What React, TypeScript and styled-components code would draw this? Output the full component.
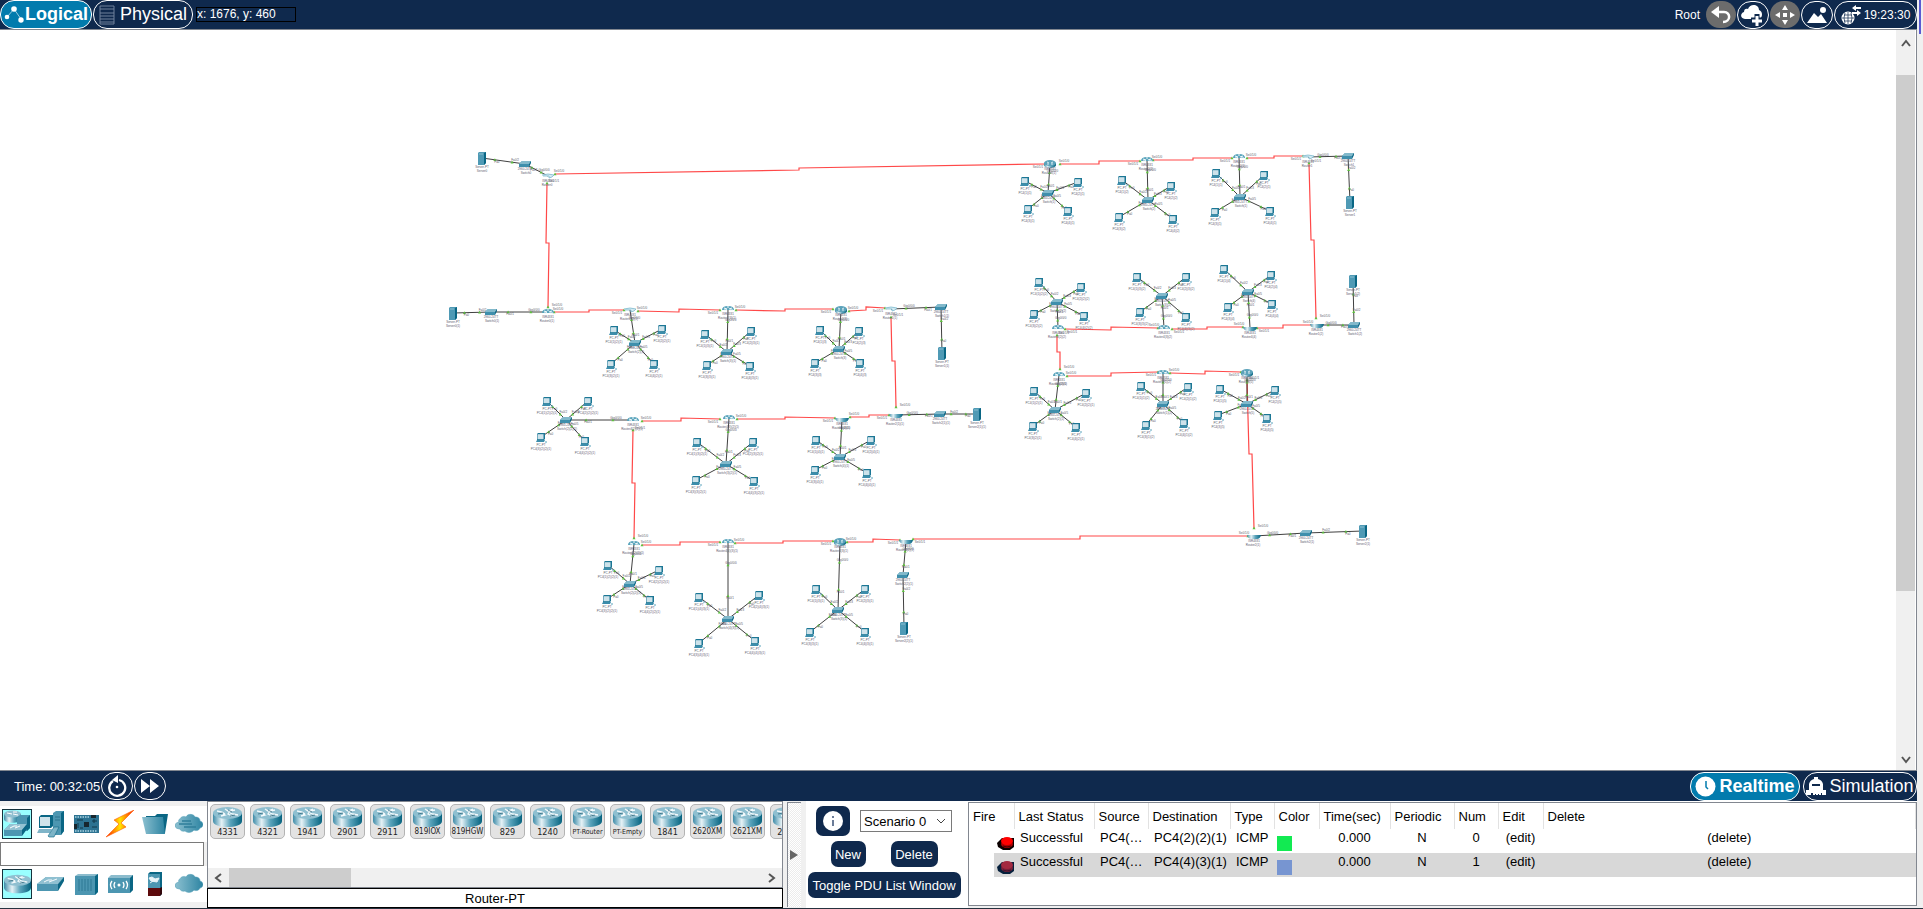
import React from 'react';
import styled, { createGlobalStyle, css } from 'styled-components';

const GlobalStyle = createGlobalStyle`
  * { box-sizing: border-box; }
  body { margin: 0; background: #f0f0f0; }
  body, button, input, select { font-family: "Liberation Sans", Arial, sans-serif; font-size: 13px; }
`;

const navy = '#0f294d';
const teal = '#027bad';
const edge = '#828790';

/* ---------- frame ---------- */

const Window = styled.div`
  position: relative;
  display: flex;
  flex-direction: column;
  min-height: 100vh;
  padding-right: 6px;
  border-bottom: 1px solid #26323f;
  color: #000;
`;

const ForeignEdge = styled.div`
  position: absolute;
  top: 0;
  right: 2px;
  width: 2px;
  height: 34px;
  background: #5a5ad2;
`;

const Bar = styled.header<{ $height: number }>`
  display: flex;
  align-items: center;
  justify-content: space-between;
  height: ${p => p.$height}px;
  background: ${navy};
  color: #fff;
`;

const BarGroup = styled.div<{ $gap?: number }>`
  display: flex;
  align-items: center;
  gap: ${p => p.$gap ?? 1}px;
`;

const Pill = styled.button<{ $active?: boolean; $width: number }>`
  display: flex;
  align-items: center;
  justify-content: center;
  gap: ${p => (p.$active ? 1 : 3)}px;
  width: ${p => p.$width}px;
  height: 29px;
  padding: 0;
  border: 1px solid #fff;
  border-radius: 14px;
  background: ${p => (p.$active ? teal : navy)};
  color: #fff;
  font-size: 18px;
  font-weight: ${p => (p.$active ? 700 : 400)};
  white-space: nowrap;
`;

const RoundButton = styled.button<{ $muted?: boolean; $wide?: boolean }>`
  display: flex;
  align-items: center;
  justify-content: center;
  gap: 2px;
  width: ${p => (p.$wide ? 83 : p.$muted ? 30 : 32)}px;
  height: ${p => (p.$muted ? 27 : 28)}px;
  padding: 0;
  border: ${p => (p.$muted ? 'none' : '1px solid #fff')};
  border-radius: 14px;
  background: ${p => (p.$muted ? '#6c6c6c' : navy)};
  color: #fff;
  font-size: 12px;
`;

const Coordinates = styled.output`
  width: 100px;
  height: 15px;
  margin-left: 2px;
  border: 1px solid #000;
  font-size: 12px;
  line-height: 13px;
`;

const RootLabel = styled.span`
  margin-right: 5px;
  font-size: 12px;
`;

const Clock = styled.span`
  padding-left: 14px;
`;

/* ---------- workspace ---------- */

const Workspace = styled.main`
  display: flex;
  flex: 1;
  min-height: 640px;
  border: solid ${edge};
  border-width: 1px 1px 1px 0;
  background: #fff;
`;

const Topology = styled.svg`
  flex: 1;
  min-width: 0;
  display: block;
  font-family: "Liberation Sans", Arial, sans-serif;
  font-size: 3px;
`;

const VScroll = styled.div`
  display: flex;
  flex-direction: column;
  width: 20px;
  border-right: 1px solid #fff;
  background: #f0f0f0;
`;

const VThumb = styled.div`
  flex: 516;
  background: #cdcdcd;
`;
const VRest = styled.div`
  flex: 150;
`;

const ScrollButton = styled.button<{ $size: number; $vertical?: boolean }>`
  display: flex;
  align-items: center;
  justify-content: center;
  flex: none;
  width: ${p => (p.$vertical ? 19 : p.$size)}px;
  height: ${p => (p.$vertical ? p.$size : 19)}px;
  padding: 0;
  border: 0;
  background: #f0f0f0;
`;

/* ---------- bottom panels ---------- */

const Dock = styled.footer`
  display: flex;
  height: 107px;
`;

const Picker = styled.section`
  display: flex;
  flex-direction: column;
  width: 207px;
  padding: 5px 0 6px;
`;

const IconRow = styled.div`
  display: flex;
  flex: 1;
  align-items: center;
  justify-content: space-between;
  padding: 0 3px 0 2px;
  background: #fff;
`;

const KindButton = styled.button<{ $selected?: boolean }>`
  display: flex;
  align-items: center;
  justify-content: center;
  width: 30px;
  height: 30px;
  padding: 0;
  border: ${p => (p.$selected ? '1px solid #15323c' : '0')};
  background: ${p => (p.$selected ? '#99ffff' : 'transparent')};
`;

const DeviceName = styled.input`
  width: 204px;
  height: 24px;
  border: 1px solid #7a7a7a;
  background: #fff;
`;

const Models = styled.section`
  display: flex;
  flex-direction: column;
  width: 576px;
`;

const ModelList = styled.div`
  display: flex;
  flex: 1;
  flex-direction: column;
  justify-content: space-between;
  border: 1px solid ${edge};
  background: #fff;
`;

const ModelStrip = styled.div`
  display: flex;
  gap: 5px;
  padding: 2px 0 0 2px;
  overflow: hidden;
`;

const ModelButton = styled.button<{ $font: number }>`
  display: flex;
  flex: none;
  flex-direction: column;
  align-items: center;
  width: 35px;
  height: 35px;
  padding: 2px 0 0;
  border: 1px solid #b4b4b4;
  border-radius: 5px;
  background: #e3e3e3;
  color: #222;
  font-family: "DejaVu Sans Condensed", "DejaVu Sans", sans-serif;
  font-size: ${p => p.$font}px;
  line-height: 10px;
  white-space: nowrap;
`;

const HScroll = styled.div`
  display: flex;
  height: 19px;
  background: #f0f0f0;
`;

const HThumb = styled.div`
  width: 122px;
  background: #cdcdcd;
`;

const HRest = styled.div`
  flex: 1;
`;

const ModelName = styled.div`
  height: 20px;
  border: 1px solid #000;
  background: #fff;
  line-height: 19px;
  text-align: center;
`;

const Splitter = styled.button`
  display: flex;
  align-items: center;
  width: 14px;
  margin: 1px 5px 1px 4px;
  padding: 0 0 0 1px;
  border: solid ${edge};
  border-width: 1px 0 0 1px;
  background: repeating-conic-gradient(#fff 0 25%, #ececec 0 50%) 0 0 / 2px 2px;
`;

const Scenario = styled.section`
  display: flex;
  flex-direction: column;
  align-items: center;
  gap: 5px;
  width: 162px;
  padding: 5px 6px 0 0;
  background: #fff;
`;

const ScenarioRow = styled.div<{ $gap: number }>`
  display: flex;
  align-items: center;
  gap: ${p => p.$gap}px;
`;

const DarkButton = styled.button<{ $width: number; $height?: number }>`
  display: flex;
  align-items: center;
  justify-content: center;
  width: ${p => p.$width}px;
  height: ${p => p.$height ?? 26}px;
  padding: 0;
  border: 0;
  border-radius: 7px;
  background: ${navy};
  color: #fff;
  white-space: nowrap;
`;

const SelectBox = styled.div`
  position: relative;
  svg { position: absolute; right: 6px; top: 8px; pointer-events: none; }
`;

const ScenarioSelect = styled.select`
  appearance: none;
  width: 92px;
  height: 22px;
  padding: 0 0 0 3px;
  border: 1px solid #7a7a7a;
  border-radius: 0;
  background: #fff;
  color: #000;
`;

const PduPanel = styled.section`
  flex: 1;
  min-width: 0;
  margin-bottom: 2px;
  padding-top: 1px;
  background: #fff;
`;

const PduFrame = styled.div`
  height: 104px;
  border: 1px solid ${edge};
  overflow: hidden;
`;

const PduTable = styled.table`
  width: 100%;
  table-layout: fixed;
  border-collapse: collapse;
`;

const Th = styled.th`
  height: 26px;
  padding: 0 0 0 4px;
  border-right: 1px solid #e2e2e2;
  font-weight: 400;
  text-align: left;
  white-space: nowrap;
`;

const Td = styled.td<{ $center?: boolean; $icon?: boolean }>`
  height: 24px;
  padding: 0 0 6px 6px;
  overflow: hidden;
  white-space: nowrap;
  line-height: 18px;
  ${p => p.$center && css`padding-left: 0; text-align: center;`}
  ${p => p.$icon && css`padding: 4px 0 0 3px; line-height: 0;`}
`;

const Tr = styled.tr<{ $selected?: boolean }>`
  ${p => p.$selected && css`
    td { background: #d8d8d8; }
    td:first-child { background: linear-gradient(to right, #fff 25px, #d8d8d8 25px); }
  `}
`;

const Swatch = styled.span<{ $color: string }>`
  display: inline-block;
  width: 15px;
  height: 15px;
  background: ${p => p.$color};
`;

const FireButton = styled.button`
  margin-left: 25px;
  padding: 0;
  border: 0;
  background: none;
  line-height: 0;
`;

/* ---------- icons ---------- */

const Gradients = () => (
  <svg width="0" height="0" aria-hidden="true" display="block">
    <defs>
      <linearGradient id="drum" x1="0" x2="1">
        <stop offset="0" stopColor="#3d8ba8" />
        <stop offset="0.3" stopColor="#e6f2f6" />
        <stop offset="0.6" stopColor="#5aa3bb" />
        <stop offset="1" stopColor="#06637f" />
      </linearGradient>
      <linearGradient id="steel" x1="0" x2="1">
        <stop offset="0" stopColor="#8cc0d0" />
        <stop offset="1" stopColor="#2d84a2" />
      </linearGradient>
      <linearGradient id="flash" x1="0" x2="1">
        <stop offset="0" stopColor="#ff1400" />
        <stop offset="0.5" stopColor="#ffe600" />
        <stop offset="1" stopColor="#ff1400" />
      </linearGradient>
    </defs>
  </svg>
);

const RouterIcon = ({ w = 29, h = 20 }: { w?: number; h?: number }) => (
  <svg width={w} height={h} viewBox="0 0 29 20">
    <path d="M0 6v8c0 8 29 8 29 0V6z" fill="url(#drum)" />
    <ellipse cx="14.500" cy="6" rx="14.500" ry="6" fill="#8fbfd0" />
    <path d="M4 4l5 1 3 2M25 8l-5-1-3-1M8 9l4-1-2-1M12 2l3 2 5-2M19 9l-4-2 2-3 5-1" fill="none" stroke="#f4fafc" strokeWidth="1.300" />
    <path d="M5 7l5-1M15 3l4 2M17 9l5-1" stroke="#265d72" strokeWidth="0.700" />
  </svg>
);

const NetDevicesIcon = () => (
  <svg width="28" height="28" viewBox="0 0 28 28">
    <path d="M1 4v5c0 5 17 5 17 0V4z" fill="url(#drum)" />
    <ellipse cx="9.500" cy="4" rx="8.500" ry="3.500" fill="#8fbfd0" />
    <path d="M4 3l5 1M15 5l-5-1M10 2l4 0" stroke="#fff" />
    <path d="M14 8l3-3h10v13l-3 3H14z" fill="#4c96b1" />
    <path d="M24 8l3-3v13l-3 3z" fill="#0a6684" />
    <path d="M1 20l6-6h17l-5 6v6H1z" fill="#4c96b1" />
    <path d="M1 20l6-6h17l-5 6z" fill="#93c2d2" />
    <path d="M19 20l5-6v5l-5 7z" fill="#0a6684" />
    <path d="M7 18l4-2 3 0M12 18l5-2" stroke="#fff" fill="none" />
  </svg>
);

const EndDevicesIcon = () => (
  <svg width="28" height="28" viewBox="0 0 28 28">
    <path d="M16 3l3-2h8v20l-3 4h-8z" fill="#4c96b1" />
    <path d="M24 3l3-2v20l-3 4z" fill="#0a6684" />
    <path d="M18 7h5M18 10h5" stroke="#2a728d" />
    <path d="M2 7l2-2h12v11l-2 2H2z" fill="#0a6684" />
    <path d="M3 7h10v9H3z" fill="#cfe3ea" />
    <path d="M2 19h13l-2 4H0z" fill="#7fb4c8" />
    <path d="M11 26l6-9h5l-5 10h-5z" fill="#7db4c7" stroke="#0a6684" strokeWidth="0.600" />
  </svg>
);

const BoardIcon = () => (
  <svg width="28" height="28" viewBox="0 0 28 28">
    <path d="M2 5h25v18H2z" fill="#2c7291" />
    <path d="M3 7h14M3 21h22" stroke="#a9d3e2" strokeWidth="1.500" strokeDasharray="1.500 1" />
    <path d="M12 12h5v5h-5zM19 5h5v3h-5zM2 14h3v5H2z" fill="#17262e" />
    <path d="M5 10h6M20 11h5M6 13v5M20 17h5M8 18h3M22 9v4" stroke="#10394b" />
  </svg>
);

const BoltIcon = () => (
  <svg width="28" height="28" viewBox="0 0 28 28">
    <path d="M28 0L8 10l5 4L0 27l20-10-5-4z" fill="url(#flash)" stroke="#ff5a00" strokeWidth="0.600" />
  </svg>
);

const FolderIcon = () => (
  <svg width="28" height="28" viewBox="0 0 28 28">
    <path d="M5 6h9l2-2h11l-3 19H6z" fill="#0a6684" />
    <path d="M1 7h21l2 17H5z" fill="url(#steel)" />
  </svg>
);

const CloudIcon = ({ lines }: { lines?: boolean }) => (
  <svg width="28" height="28" viewBox="0 0 28 28">
    <path d="M5 9c1-3 5-3 6-2 2-4 8-3 9 0 4 0 5 2 5 4 4 1 4 6 0 7-1 3-5 3-6 2-2 3-7 3-9 1-3 1-5-1-5-2-6 0-7-6-1-7-1-1 0-3 1-3z" fill="url(#steel)" stroke="#4b9ab5" strokeWidth="0.500" />
    {lines && <path d="M7 11h9M4 14h13M9 17h12" stroke="#2f7f9b" strokeWidth="1.300" />}
  </svg>
);

const SwitchIcon = () => (
  <svg width="28" height="28" viewBox="0 0 28 28">
    <path d="M0 14l9-7h18l-6 7v7H0z" fill="#4c96b1" />
    <path d="M0 14l9-7h18l-6 7z" fill="#8fc0d1" />
    <path d="M21 14l6-7v4l-6 10z" fill="#0a6684" />
    <path d="M7 12l4-2h4M12 12l8-3" stroke="#f4fafc" fill="none" />
  </svg>
);

const HubIcon = () => (
  <svg width="28" height="28" viewBox="0 0 28 28">
    <path d="M3 6l3-2h20v18l-3 3H3z" fill="#8cbccd" />
    <path d="M3 6h20v19H3z" fill="#4c96b1" />
    <path d="M23 6l3-2v18l-3 3z" fill="#0a6684" />
    <path d="M7 9v12M10 9v12M13 9v12M16 9v12M19 9v12" stroke="#2c7994" />
  </svg>
);

const WirelessIcon = () => (
  <svg width="28" height="28" viewBox="0 0 28 28">
    <path d="M2 8l3-3h22v15l-3 3H2z" fill="#8cbccd" />
    <path d="M2 8h22v15H2z" fill="#4c96b1" />
    <path d="M24 8l3-3v15l-3 3z" fill="#0a6684" />
    <circle cx="13" cy="15" r="1.500" fill="#fff" />
    <path d="M9 12q-2 3 0 6M17 12q2 3 0 6M6 11q-3 4 0 8M20 11q3 4 0 8" stroke="#fff" strokeWidth="1.300" fill="none" />
  </svg>
);

const FirewallIcon = () => (
  <svg width="28" height="28" viewBox="0 0 28 28">
    <path d="M7 4l2-2h12v22l-2 2H7z" fill="#0a6684" />
    <path d="M7 4h12v14H7z" fill="#4c96b1" />
    <path d="M7 18h12v8H7z" fill="#5d0a0c" />
    <path d="M19 18l2-1v7l-2 2z" fill="#32060a" />
    <path d="M8 8l3-1 3 2 4-1-2 4-6-1zM9 13l3-2" fill="#e9f4f8" stroke="#e9f4f8" />
  </svg>
);

const Chevron = ({ d, w, h }: { d: string; w: number; h: number }) => (
  <svg width={w} height={h} viewBox={`0 0 ${w} ${h}`}>
    <path d={d} fill="none" stroke="#555" strokeWidth="2" />
  </svg>
);

const LogicalIcon = () => (
  <svg width="20" height="18" viewBox="0 0 20 18">
    <path d="M3 11l7-8 7 10" fill="none" stroke="#9ccbe0" />
    <circle cx="3" cy="11" r="2.300" fill="#fff" />
    <circle cx="10" cy="3" r="2.800" fill="#fff" />
    <circle cx="17" cy="14" r="2.700" fill="#fff" />
  </svg>
);

const RackIcon = () => (
  <svg width="18" height="20" viewBox="0 0 18 20">
    <path d="M1 1h14v18H1zM1 4h14M1 8h14M1 11h14M1 14h14M1 17h14" fill="none" stroke="#71829c" />
  </svg>
);

const UndoIcon = () => (
  <svg width="22" height="20" viewBox="0 0 22 20">
    <path d="M1 7l8-6v12z" fill="#fff" />
    <path d="M7 7h7c7 0 7 10-1 10" fill="none" stroke="#fff" strokeWidth="2.500" />
  </svg>
);

const CloudAddIcon = () => (
  <svg width="24" height="22" viewBox="0 0 24 22">
    <path d="M4 15c-5 0-5-6-1-7 0-3 2-4 4-3C9-1 18 0 18 6c4 1 4 8 0 9z" fill="#fff" />
    <path d="M16 10v12M10 16h12" stroke={navy} strokeWidth="5" />
    <path d="M16 12v10M11 17h10" stroke="#fff" strokeWidth="3" />
  </svg>
);

const MoveIcon = () => (
  <svg width="22" height="20" viewBox="0 0 22 20">
    <path d="M11 0l3 5H8zM11 20l3-5H8zM1 10l5-3v6zM21 10l-5-3v6zM9 8h4v4H9z" fill="#fff" />
  </svg>
);

const LandscapeIcon = () => (
  <svg width="22" height="18" viewBox="0 0 22 18">
    <path d="M1 17l7-10 4 4 3-3 6 9z" fill="#fff" />
    <circle cx="17" cy="4" r="3" fill="#fff" />
  </svg>
);

const GlobeIcon = () => (
  <svg width="21" height="20" viewBox="0 0 21 20">
    <circle cx="7" cy="13" r="6.500" fill="#fff" />
    <path d="M1 13h12M7 7v12M3 10h8M3 16h8M4 8q-2 5 0 10M10 8q2 5 0 10" fill="none" stroke={navy} strokeWidth="0.700" />
    <path d="M14 3h6M11 8h7" stroke="#fff" strokeWidth="2" />
    <path d="M15 0v6l-4-3zM16 5v6l4-3z" fill="#fff" />
  </svg>
);

const ResetIcon = () => (
  <svg width="20" height="22" viewBox="0 0 20 22">
    <path d="M12 5a8 8 0 1 1-6 1" fill="none" stroke="#fff" strokeWidth="2.300" />
    <path d="M5 5l6-5v8z" fill="#fff" />
    <circle cx="10" cy="12" r="1.300" fill="#fff" />
  </svg>
);

const ForwardIcon = () => (
  <svg width="18" height="14" viewBox="0 0 18 14">
    <path d="M0 0l9 7-9 7zM9 0l9 7-9 7z" fill="#fff" />
  </svg>
);

const ClockIcon = () => (
  <svg width="23" height="21" viewBox="0 0 23 21">
    <circle cx="10.500" cy="10.500" r="10" fill="#fff" />
    <path d="M11 5v6l2 2" fill="none" stroke={teal} strokeWidth="1.500" />
  </svg>
);

const SimulationIcon = () => (
  <svg width="20" height="18" viewBox="0 0 20 18">
    <path d="M3 13V7q1-4 5-5V0h4v2q4 1 5 5v6h3v5h-4v-2h-1v2h-2v-1h-1v1h-2v-1H9v1H7v-2H5v2H0v-5z" fill="#fff" />
    <path d="M6 8h8" stroke={navy} strokeWidth="2" />
  </svg>
);

const InfoIcon = () => (
  <svg width="20" height="20" viewBox="0 0 20 20">
    <circle cx="10" cy="10" r="10" fill="#fff" />
    <path d="M10 9v6M10 5v2" stroke="#6b7c98" strokeWidth="2" />
  </svg>
);

const FireIcon = ({ selected }: { selected?: boolean }) => (
  <svg width="17" height="14" viewBox="0 0 17 14">
    <path d="M0 7l5-5h12v9l-4 3H6L1 11z" fill={selected ? '#06203c' : '#0a0000'} />
    <ellipse cx="10" cy="8" rx="6" ry="4" fill={selected ? '#7a2038' : '#b00000'} />
    <ellipse cx="10" cy="5" rx="6" ry="4" fill={selected ? '#a32a40' : '#ff0000'} />
    <path d="M6 10q4 2 8 0" fill="none" stroke={selected ? '#3c1430' : '#400'} />
  </svg>
);

/* ---------- topology ---------- */

type P = [number, number];
type RouterLook = 'full' | 'top' | 'cup' | 'faint';

interface Site {
  router: P;
  look: RouterLook;
  hub: P;
  pcs: P[];
  tag: string;
}

const sites: Site[] = [
  { router: [630, 310], look: 'faint', hub: [635, 343], pcs: [[614, 330], [662, 329], [611, 364], [654, 364]], tag: '(2)(1)' },
  { router: [728, 309], look: 'top', hub: [727, 352], pcs: [[705, 334], [751, 331], [707, 365], [750, 366]], tag: '(3)(1)' },
  { router: [841, 310], look: 'full', hub: [839, 349], pcs: [[820, 330], [859, 331], [815, 363], [860, 363]], tag: '(3)' },
  { router: [1050, 164], look: 'full', hub: [1048, 193], pcs: [[1025, 181], [1078, 182], [1028, 209], [1068, 211]], tag: '(1)' },
  { router: [1147, 160], look: 'top', hub: [1148, 200], pcs: [[1122, 180], [1171, 186], [1119, 217], [1173, 219]], tag: '(2)' },
  { router: [1239, 157], look: 'top', hub: [1240, 197], pcs: [[1216, 173], [1264, 175], [1215, 212], [1270, 211]], tag: '(1)' },
  { router: [1058, 328], look: 'top', hub: [1057, 302], pcs: [[1039, 282], [1081, 287], [1034, 314], [1084, 316]], tag: '(2)(2)' },
  { router: [1164, 328], look: 'top', hub: [1162, 296], pcs: [[1137, 277], [1186, 277], [1140, 312], [1186, 317]], tag: '(3)(2)' },
  { router: [1250, 328], look: 'cup', hub: [1248, 292], pcs: [[1224, 269], [1271, 275], [1228, 307], [1272, 304]], tag: '(4)' },
  { router: [1059, 375], look: 'top', hub: [1055, 410], pcs: [[1034, 391], [1086, 393], [1033, 426], [1076, 427]], tag: '(2)(1)' },
  { router: [1163, 373], look: 'top', hub: [1163, 404], pcs: [[1141, 386], [1188, 387], [1146, 425], [1184, 423]], tag: '(1)(2)' },
  { router: [1247, 373], look: 'full', hub: [1247, 404], pcs: [[1220, 389], [1275, 390], [1218, 415], [1267, 418]], tag: '(5)' },
  { router: [633, 420], look: 'top', hub: [566, 420], pcs: [[547, 401], [588, 401], [541, 437], [585, 441]], tag: '(2)(2)(1)' },
  { router: [729, 418], look: 'top', hub: [726, 464], pcs: [[697, 442], [753, 442], [696, 480], [754, 481]], tag: '(3)(2)(1)' },
  { router: [842, 419], look: 'cup', hub: [840, 457], pcs: [[816, 440], [871, 440], [815, 470], [867, 473]], tag: '(4)(1)' },
  { router: [634, 544], look: 'top', hub: [630, 584], pcs: [[608, 565], [659, 570], [607, 599], [650, 600]], tag: '(2)(2)(1)' },
  { router: [728, 542], look: 'top', hub: [728, 619], pcs: [[699, 597], [759, 595], [699, 643], [755, 641]], tag: '(4)(3)(1)' },
  { router: [840, 542], look: 'full', hub: [838, 610], pcs: [[816, 589], [865, 589], [810, 632], [865, 632]], tag: '(3)(1)' },
];

const branches: { router: P; look: RouterLook; hub: P; server: P; tag: string }[] = [
  { router: [548, 176], look: 'faint', hub: [525, 164], server: [482, 158], tag: '0' },
  { router: [548, 312], look: 'top', hub: [491, 312], server: [453, 313], tag: '0(1)' },
  { router: [891, 309], look: 'faint', hub: [941, 307], server: [942, 353], tag: '1(1)' },
  { router: [1308, 157], look: 'faint', hub: [1348, 156], server: [1350, 202], tag: '1' },
  { router: [1317, 325], look: 'cup', hub: [1354, 325], server: [1353, 281], tag: '1(2)' },
  { router: [896, 415], look: 'cup', hub: [940, 414], server: [977, 414], tag: '2(1)(1)' },
  { router: [906, 541], look: 'cup', hub: [903, 575], server: [904, 628], tag: '2(2)(1)' },
  { router: [1254, 536], look: 'cup', hub: [1306, 533], server: [1363, 531], tag: '2(1)' },
];

const serialLinks: P[][] = [
  [[555, 174], [799, 170], [799, 168], [1045, 164]],
  [[547, 183], [546, 243], [549, 243], [548, 307]],
  [[554, 312], [589, 312], [589, 310], [624, 310]],
  [[638, 311], [679, 312], [679, 309], [720, 310]],
  [[736, 310], [785, 311], [785, 309], [833, 309]],
  [[849, 311], [866, 310], [866, 307], [885, 308]],
  [[891, 317], [892, 361], [895, 361], [896, 407]],
  [[1060, 164], [1099, 164], [1099, 161], [1140, 161]],
  [[1153, 160], [1193, 160], [1193, 158], [1232, 158]],
  [[1247, 158], [1274, 158], [1274, 156], [1303, 156]],
  [[1309, 163], [1311, 240], [1314, 240], [1316, 318]],
  [[1312, 325], [1283, 325], [1283, 328], [1257, 328]],
  [[1243, 327], [1207, 327], [1207, 329], [1172, 329]],
  [[1158, 328], [1111, 327], [1111, 330], [1065, 329]],
  [[1057, 335], [1057, 352], [1060, 352], [1060, 369]],
  [[1067, 376], [1111, 376], [1111, 373], [1158, 372]],
  [[1170, 373], [1205, 374], [1205, 371], [1241, 372]],
  [[1247, 380], [1249, 454], [1252, 454], [1254, 528]],
  [[1248, 536], [1080, 536], [1080, 539], [913, 539]],
  [[642, 421], [681, 421], [681, 418], [720, 419]],
  [[737, 419], [785, 419], [785, 417], [835, 418]],
  [[850, 417], [869, 417], [869, 415], [889, 415]],
  [[633, 430], [632, 483], [635, 483], [634, 538]],
  [[642, 545], [680, 545], [680, 542], [720, 542]],
  [[735, 543], [783, 543], [783, 541], [833, 541]],
  [[847, 542], [873, 542], [873, 539], [900, 540]],
];

const mix = (a: P, b: P, t: number): P => [a[0] + (b[0] - a[0]) * t, a[1] + (b[1] - a[1]) * t];

const Label = ({ at, children }: { at: P; children: React.ReactNode }) => (
  <text x={at[0]} y={at[1]} textAnchor="middle" fill="#5c5a6c">{children}</text>
);

const Port = ({ at }: { at: P }) => (
  <path d={`M${at[0] - 1.5} ${at[1] + 1.2}l1.500-2.700 1.500 2.700z`} fill="#5cc03c" />
);

const Serial = ({ points }: { points: P[] }) => {
  const first = points[0];
  const last = points[points.length - 1];
  const vertical = Math.abs(first[0] - last[0]) < 12;
  const side = first[0] < last[0] ? 1 : -1;
  return (
    <g>
      <polyline points={points.map(p => p.join(',')).join(' ')} fill="none" stroke="#ff4848" strokeWidth="1.200" />
      <Port at={first} />
      <Port at={last} />
      {vertical ? (
        <>
          <Label at={[first[0] + 7, first[1] - 1]}>Se0/1/1</Label>
          <Label at={[last[0] + 9, last[1] - 1]}>Se0/1/0</Label>
        </>
      ) : (
        <>
          <Label at={[first[0] + 4 * side, first[1] - 2]}>Se0/1/0</Label>
          <Label at={[last[0] - 7 * side, last[1] + 4]}>Se0/1/1</Label>
        </>
      )}
    </g>
  );
};

const Copper = ({ from, to, near, far }: { from: P; to: P; near: string; far: string }) => {
  const a = mix(from, to, 0.3);
  const b = mix(from, to, 0.7);
  return (
    <g>
      <line x1={from[0]} y1={from[1]} x2={to[0]} y2={to[1]} stroke="#2a2a2a" strokeWidth="0.900" />
      <Port at={a} />
      <Port at={b} />
      <Label at={[a[0] + 3, a[1] - 1]}>{near}</Label>
      <Label at={[b[0] + 2, b[1] + 3]}>{far}</Label>
    </g>
  );
};

const RouterNode = ({ at, look, name }: { at: P; look: RouterLook; name: string }) => (
  <g>
    <g transform={`translate(${at[0]} ${at[1]})`}>
      {look === 'full' && (
        <>
          <path d="M-6-1v2c0 4 12 4 12 0v-2z" fill="url(#drum)" />
          <ellipse cy="-1" rx="6" ry="3" fill="#5ba2ba" />
          <path d="M-3-2l2 1M3-2l-2 1M-3 0h2M1 0h2" stroke="#e6f2f6" strokeWidth="0.900" />
        </>
      )}
      {look === 'top' && (
        <>
          <path d="M-6 1q0-4 6-4t6 4z" fill="#58a3bb" />
          <path d="M-4-1l3 1M4-1l-3 1M-1-2l2 0M-4 1h3M2 1h3" stroke="#f2f9fb" strokeWidth="1.100" />
        </>
      )}
      {look === 'cup' && <path d="M-7-1h14q-1 4-4 4h-5q-4 0-5-4z" fill="url(#drum)" />}
      {look === 'faint' && (
        <path d="M-6-1q6-2 12 0l-2 2-3 1v-2l-6 0" fill="#d5ebf2" stroke="#6fb2c8" strokeWidth="0.700" />
      )}
    </g>
    <Label at={[at[0], at[1] + 6]}>ISR4331</Label>
    <Label at={[at[0] - 1, at[1] + 10]}>{name}</Label>
  </g>
);

const HubNode = ({ at, name }: { at: P; name: string }) => (
  <g>
    <g transform={`translate(${at[0]} ${at[1]})`}>
      <path d="M-6 0l3-3h9l-2 3v3H-6z" fill="#3f8fac" />
      <path d="M-6 0l3-3h9l-2 3z" fill="#82b9cb" />
      <path d="M4 0l2-3v2l-2 4z" fill="#0a6684" />
    </g>
    <Label at={[at[0], at[1] + 6]}>2960-24TT</Label>
    <Label at={[at[0] + 1, at[1] + 10]}>{name}</Label>
  </g>
);

const PcNode = ({ at, name }: { at: P; name: string }) => (
  <g>
    <g transform={`translate(${at[0]} ${at[1]})`}>
      <path d="M-4-3l1-1h7v6l-1 1h-7z" fill="#1c7795" />
      <path d="M-3.500-2.800h6v5h-6z" fill="#cde2ea" />
      <path d="M-4 3h8l-1 2h-8z" fill="#3c8dab" />
      <path d="M4 5h2" stroke="#5aa3bb" />
    </g>
    <Label at={[at[0], at[1] + 9]}>PC-PT</Label>
    <Label at={[at[0], at[1] + 13]}>{name}</Label>
  </g>
);

const ServerNode = ({ at, name }: { at: P; name: string }) => (
  <g>
    <g transform={`translate(${at[0]} ${at[1]})`}>
      <path d="M-4-5l1-1h7v11l-2 2h-6z" fill="#4f9ab5" />
      <path d="M2-5l2-1v11l-2 2z" fill="#0a6684" />
      <path d="M-3-4h4" stroke="#a5cedb" strokeWidth="0.700" />
    </g>
    <Label at={[at[0], at[1] + 10]}>Server-PT</Label>
    <Label at={[at[0], at[1] + 14]}>{name}</Label>
  </g>
);

const NetworkMap = () => (
  <Topology role="img" aria-label="Network topology">
    <g transform="translate(0 -30)">
      {serialLinks.map((points, i) => <Serial key={i} points={points} />)}
      {sites.map((s, i) => (
        <g key={i}>
          <Copper from={s.router} to={s.hub} near="Gig0/0/0" far="Fa0/1" />
          {s.pcs.map((pc, n) => <Copper key={n} from={s.hub} to={pc} near={`Fa0/${n + 2}`} far="Fa0" />)}
          <RouterNode at={s.router} look={s.look} name={`Router4${s.tag}`} />
          <HubNode at={s.hub} name={`Switch${s.tag}`} />
          {s.pcs.map((pc, n) => <PcNode key={n} at={pc} name={`PC4(${n + 1})${s.tag}`} />)}
        </g>
      ))}
      {branches.map((b, i) => (
        <g key={i}>
          <Copper from={b.router} to={b.hub} near="Gig0/0/0" far="Fa0/1" />
          <Copper from={b.hub} to={b.server} near="Fa0/2" far="Fa0" />
          <RouterNode at={b.router} look={b.look} name={`Router${b.tag}`} />
          <HubNode at={b.hub} name={`Switch${b.tag}`} />
          <ServerNode at={b.server} name={`Server${b.tag}`} />
        </g>
      ))}
    </g>
  </Topology>
);

/* ---------- data ---------- */

const models: [string, number][] = [
  ['4331', 9], ['4321', 9], ['1941', 9], ['2901', 9], ['2911', 9], ['819IOX', 8], ['819HGW', 8], ['829', 9],
  ['1240', 9], ['PT-Router', 7], ['PT-Empty', 7], ['1841', 9], ['2620XM', 8], ['2621XM', 8], ['2811', 9],
];

const columns: [string, number | undefined][] = [
  ['Fire', 45], ['Last Status', 80], ['Source', 54], ['Destination', 82], ['Type', 44], ['Color', 45],
  ['Time(sec)', 71], ['Periodic', 64], ['Num', 44], ['Edit', 45], ['Delete', undefined],
];

const pdus = [
  { destination: 'PC4(2)(2)(1)', color: '#12ea52', num: 0 },
  { destination: 'PC4(4)(3)(1)', color: '#7795d1', num: 1 },
];

const kinds: [string, React.ReactNode][] = [
  ['Network Devices', <NetDevicesIcon />],
  ['End Devices', <EndDevicesIcon />],
  ['Components', <BoardIcon />],
  ['Connections', <BoltIcon />],
  ['Miscellaneous', <FolderIcon />],
  ['Multiuser', <CloudIcon lines />],
];

const subKinds: [string, React.ReactNode][] = [
  ['Routers', <RouterIcon w={27} h={20} />],
  ['Switches', <SwitchIcon />],
  ['Hubs', <HubIcon />],
  ['Wireless Devices', <WirelessIcon />],
  ['Security', <FirewallIcon />],
  ['WAN Emulation', <CloudIcon />],
];

export default function App() {
  return (
    <>
      <GlobalStyle />
      <Window>
        <ForeignEdge />
        <Bar $height={29}>
          <BarGroup $gap={1}>
            <Pill $active $width={92}><LogicalIcon />Logical</Pill>
            <Pill $width={100}><RackIcon />Physical</Pill>
            <Coordinates>x: 1676, y: 460</Coordinates>
          </BarGroup>
          <BarGroup>
            <RootLabel>Root</RootLabel>
            <RoundButton $muted aria-label="Back"><UndoIcon /></RoundButton>
            <RoundButton aria-label="New cluster"><CloudAddIcon /></RoundButton>
            <RoundButton $muted aria-label="Move object"><MoveIcon /></RoundButton>
            <RoundButton aria-label="Set background"><LandscapeIcon /></RoundButton>
            <RoundButton $wide><GlobeIcon />19:23:30</RoundButton>
          </BarGroup>
        </Bar>

        <Workspace>
          <NetworkMap />
          <VScroll>
            <ScrollButton $vertical $size={45} aria-label="Scroll up">
              <Chevron d="M1 7l4-5 4 5" w={10} h={28} />
            </ScrollButton>
            <VThumb />
            <VRest />
            <ScrollButton $vertical $size={29} aria-label="Scroll down">
              <Chevron d="M1 12l4 5 4-5" w={10} h={22} />
            </ScrollButton>
          </VScroll>
        </Workspace>

        <Bar as="div" $height={30}>
          <BarGroup>
            <Clock>Time: 00:32:05</Clock>
            <RoundButton aria-label="Power cycle devices"><ResetIcon /></RoundButton>
            <RoundButton aria-label="Fast forward"><ForwardIcon /></RoundButton>
          </BarGroup>
          <BarGroup $gap={3}>
            <Pill $active $width={110}><ClockIcon />Realtime</Pill>
            <Pill $width={114}><SimulationIcon />Simulation</Pill>
          </BarGroup>
        </Bar>

        <Dock>
          <Picker>
            <IconRow>
              {kinds.map(([name, icon], i) => (
                <KindButton key={name} $selected={i === 0} aria-label={name}>{icon}</KindButton>
              ))}
            </IconRow>
            <DeviceName aria-label="Device name" />
            <IconRow>
              {subKinds.map(([name, icon], i) => (
                <KindButton key={name} $selected={i === 0} aria-label={name}>{icon}</KindButton>
              ))}
            </IconRow>
          </Picker>

          <Models>
            <ModelList>
              <ModelStrip>
                {models.map(([name, font]) => (
                  <ModelButton key={name} $font={font}><RouterIcon />{name}</ModelButton>
                ))}
              </ModelStrip>
              <HScroll>
                <ScrollButton $size={21} aria-label="Scroll left"><Chevron d="M7 1L2 5l5 4" w={10} h={10} /></ScrollButton>
                <HThumb />
                <HRest />
                <ScrollButton $size={21} aria-label="Scroll right"><Chevron d="M1 1l5 4-5 4" w={8} h={10} /></ScrollButton>
              </HScroll>
            </ModelList>
            <ModelName>Router-PT</ModelName>
          </Models>

          <Splitter aria-label="Collapse panel">
            <svg width="9" height="10" viewBox="0 0 9 10"><path d="M1 0l8 5-8 5z" fill="#666" /></svg>
          </Splitter>

          <Scenario>
            <ScenarioRow $gap={10}>
              <DarkButton $width={34} $height={30} aria-label="Scenario description"><InfoIcon /></DarkButton>
              <SelectBox>
                <ScenarioSelect aria-label="Scenario"><option>Scenario 0</option></ScenarioSelect>
                <svg width="10" height="6" viewBox="0 0 10 6"><path d="M1 1l4 4 4-4" fill="none" stroke="#444" /></svg>
              </SelectBox>
            </ScenarioRow>
            <ScenarioRow $gap={25}>
              <DarkButton $width={35}>New</DarkButton>
              <DarkButton $width={47}>Delete</DarkButton>
            </ScenarioRow>
            <DarkButton $width={153}>Toggle PDU List Window</DarkButton>
          </Scenario>

          <PduPanel>
            <PduFrame>
              <PduTable>
                <colgroup>
                  {columns.map(([name, width]) => <col key={name} width={width} />)}
                </colgroup>
                <thead>
                  <tr>{columns.map(([name]) => <Th key={name} scope="col">{name}</Th>)}</tr>
                </thead>
                <tbody>
                  {pdus.map((pdu, i) => (
                    <Tr key={pdu.num} $selected={i === 1}>
                      <Td $icon><FireButton aria-label="Fire"><FireIcon selected={i === 1} /></FireButton></Td>
                      <Td>Successful</Td>
                      <Td>PC4(…</Td>
                      <Td>{pdu.destination}</Td>
                      <Td>ICMP</Td>
                      <Td $icon><Swatch $color={pdu.color} /></Td>
                      <Td $center>0.000</Td>
                      <Td $center>N</Td>
                      <Td $center>{pdu.num}</Td>
                      <Td $center>(edit)</Td>
                      <Td $center>(delete)</Td>
                    </Tr>
                  ))}
                </tbody>
              </PduTable>
            </PduFrame>
          </PduPanel>
        </Dock>
        <Gradients />
      </Window>
    </>
  );
}
